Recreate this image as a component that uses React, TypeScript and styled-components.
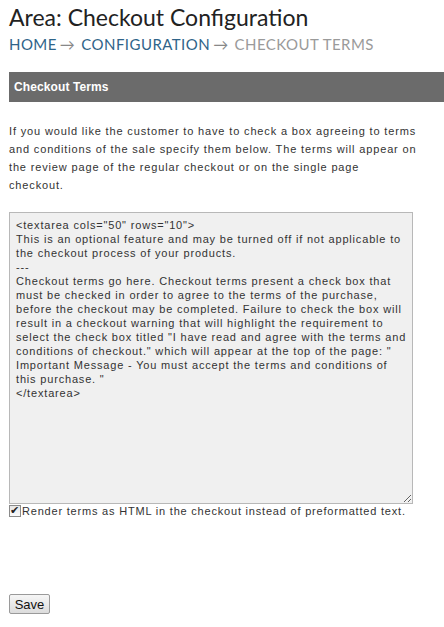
import React from "react";
import styled, { createGlobalStyle } from "styled-components";

const Global = createGlobalStyle`
  html, body { margin: 0; padding: 0; background: #fff; }
  body { font-family: "Liberation Sans", Arial, sans-serif; overflow: hidden; }
`;

const Page = styled.div`
  padding: 2px 0 0 9px;
  display: flex;
  flex-direction: column;
`;

const Title = styled.h1`
  margin: 0;
  font-family: "Lato", "Open Sans", sans-serif;
  font-weight: 400;
  font-size: 23px;
  line-height: 30px;
  color: #222;
`;

const Crumbs = styled.div`
  margin-top: 3px;
  font-family: "Lato", sans-serif;
  font-size: 15px;
  line-height: 18px;
  letter-spacing: 0.45px;
  text-transform: uppercase;
  display: flex;
  gap: 6px;
`;

const Crumb = styled.span<{ $current?: boolean }>`
  color: ${(p) => (p.$current ? "#9a9a9a" : "#2f6489")};
`;

const Arrow = styled.span`
  color: #888;
  margin-left: -3px;
`;

const SectionBar = styled.div`
  margin-top: 19px;
  height: 30px;
  background: #6b6b6b;
  color: #fff;
  font-family: "Liberation Sans", Arial, sans-serif;
  font-weight: 700;
  font-size: 12px;
  letter-spacing: 0.1px;
  display: flex;
  align-items: center;
  padding-left: 5px;
  margin-right: -10px;
`;

const Intro = styled.p`
  margin: 20px 0 0;
  width: 420px;
  font-size: 11px;
  line-height: 18px;
  letter-spacing: 0.85px;
  color: #333;
`;

const TermsBox = styled.textarea`
  margin-top: 18px;
  box-sizing: border-box;
  width: 404px;
  height: 292px;
  background: #f0f0f0;
  border: 1px solid #b8b8b8;
  padding: 5px 2px 5px 6px;
  font-family: "Liberation Sans", Arial, sans-serif;
  font-size: 11px;
  line-height: 14px;
  letter-spacing: 0.82px;
  color: #333;
  resize: both;
  outline: none;
  display: block;
  overflow: hidden;
`;

const CheckRow = styled.label`
  display: flex;
  align-items: center;
  font-size: 11px;
  letter-spacing: 0.8px;
  color: #333;
  line-height: 14px;
`;

const Check = styled.input`
  appearance: none;
  margin: 0 1px 0 0;
  width: 12px;
  height: 12px;
  box-sizing: border-box;
  border: 1px solid #8a8a8a;
  background: linear-gradient(#e6e6e6, #fafafa);
  position: relative;
  &::after {
    content: "✔";
    position: absolute;
    left: 0px;
    top: -2px;
    font-size: 11px;
    color: #222;
    font-family: "DejaVu Sans", sans-serif;
  }
`;

const SaveButton = styled.button`
  margin-top: 76px;
  align-self: flex-start;
  box-sizing: border-box;
  width: 41px;
  height: 20px;
  padding: 0;
  font-family: "Liberation Sans", Arial, sans-serif;
  font-size: 13px;
  color: #111;
  border: 1px solid #9a9a9a;
  border-radius: 2px;
  background: linear-gradient(#f6f6f6, #dcdcdc);
`;

const terms = `<textarea cols="50" rows="10">
This is an optional feature and may be turned off if not applicable to the checkout process of your products.
---
Checkout terms go here. Checkout terms present a check box that must be checked in order to agree to the terms of the purchase, before the checkout may be completed. Failure to check the box will result in a checkout warning that will highlight the requirement to select the check box titled "I have read and agree with the terms and conditions of checkout." which will appear at the top of the page: " Important Message - You must accept the terms and conditions of this purchase. "
</textarea>`;

export default function App() {
  return (
    <>
      <Global />
      <Page>
        <Title>Area: Checkout Configuration</Title>
        <Crumbs>
          <Crumb>Home</Crumb>
          <Arrow>→</Arrow>
          <Crumb>Configuration</Crumb>
          <Arrow>→</Arrow>
          <Crumb $current>Checkout Terms</Crumb>
        </Crumbs>
        <SectionBar>Checkout Terms</SectionBar>
        <Intro>
          If you would like the customer to have to check a box agreeing to terms and conditions of the sale
          specify them below. The terms will appear on the review page of the regular checkout or on the
          single page
          <br />
          checkout.
        </Intro>
        <TermsBox defaultValue={terms} />
        <CheckRow>
          <Check type="checkbox" defaultChecked />
          Render terms as HTML in the checkout instead of preformatted text.
        </CheckRow>
        <SaveButton>Save</SaveButton>
      </Page>
    </>
  );
}
